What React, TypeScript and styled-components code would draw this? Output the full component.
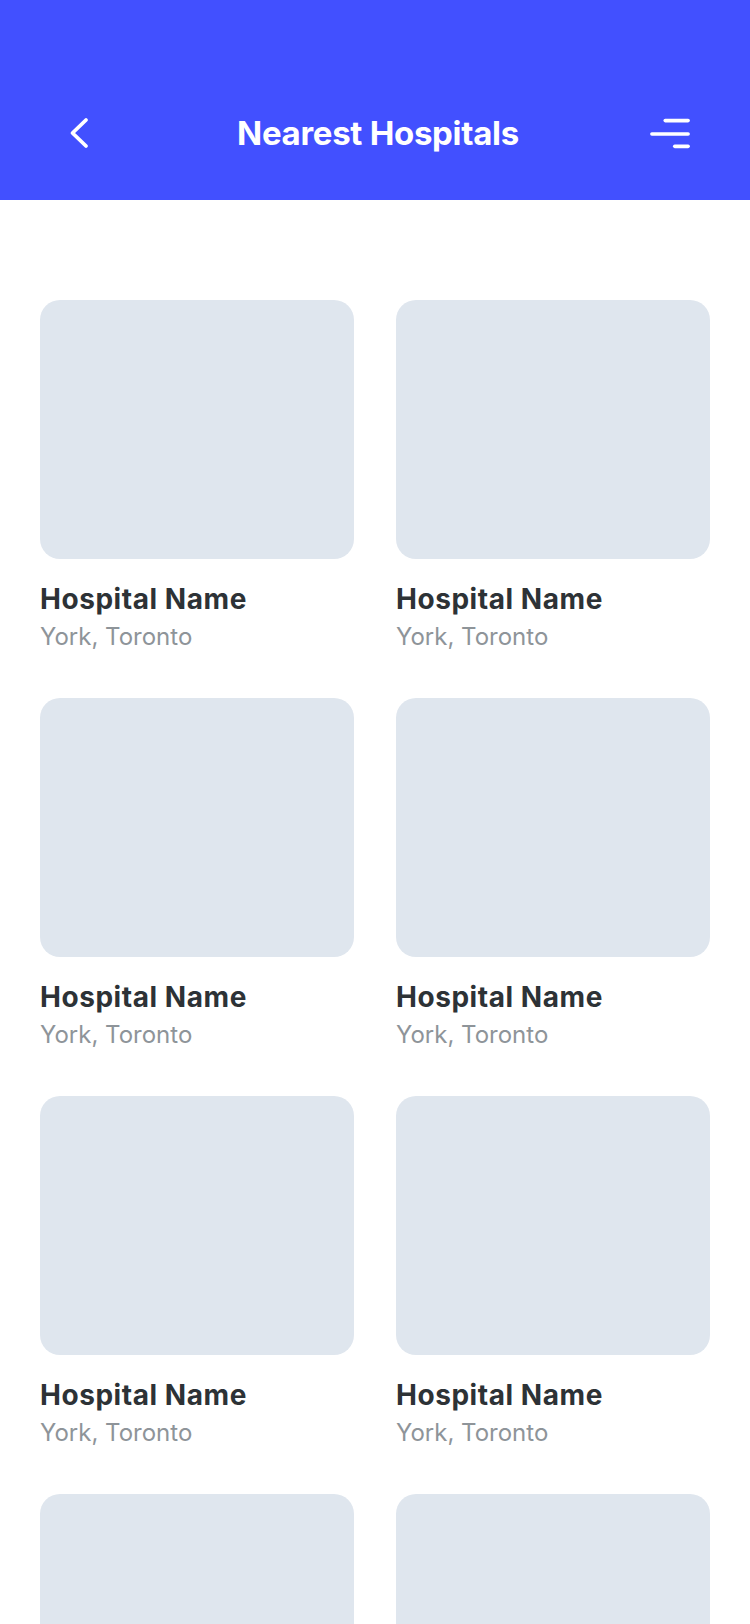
import React from "react";
import styled, { createGlobalStyle } from "styled-components";

const Global = createGlobalStyle`
  html, body { margin: 0; padding: 0; background: #ffffff; }
  body { font-family: Inter, "Open Sans", "Liberation Sans", sans-serif; -webkit-font-smoothing: antialiased; }
  * { box-sizing: border-box; }
`;

const Page = styled.div`
  width: 750px;
  height: 1624px;
  overflow: hidden;
  background: #ffffff;
`;

const Header = styled.header`
  height: 200px;
  background: #4250ff;
  display: flex;
  align-items: flex-start;
  padding: 113px 60px 0 66px;
`;

const NavRow = styled.div`
  flex: 1;
  height: 40px;
  display: grid;
  grid-template-columns: 40px 1fr 40px;
  align-items: center;
`;

const IconButton = styled.button<{ $end?: boolean }>`
  width: 40px;
  height: 40px;
  padding: 0;
  border: none;
  background: transparent;
  display: flex;
  align-items: center;
  justify-content: ${(p) => (p.$end ? "flex-end" : "flex-start")};
  color: #ffffff;
`;

const Title = styled.h1`
  margin: 0;
  text-align: center;
  color: #ffffff;
  font-size: 33px;
  font-weight: 700;
  letter-spacing: -0.3px;
  line-height: 40px;
`;

const Grid = styled.main`
  display: grid;
  grid-template-columns: 314px 314px;
  column-gap: 42px;
  row-gap: 46px;
  padding: 100px 40px 0 40px;
`;

const Card = styled.article`
  display: flex;
  flex-direction: column;
`;

const Thumb = styled.div`
  height: 259px;
  border-radius: 20px;
  background: #dfe6ee;
`;

const Name = styled.h2`
  margin: 23px 0 0;
  font-size: 28px;
  line-height: 34px;
  font-weight: 700;
  color: #2d3236;
  letter-spacing: 0.55px;
`;

const Location = styled.p`
  margin: 6px 0 0;
  font-size: 24px;
  line-height: 30px;
  font-weight: 400;
  color: #8e9499;
`;

const BackIcon = () => (
  <svg width="24" height="32" viewBox="0 0 24 32" fill="none">
    <path d="M20 3 L6.5 16 L20 29" stroke="#fff" strokeWidth="3.8" strokeLinecap="round" strokeLinejoin="round" />
  </svg>
);

const MenuIcon = () => (
  <svg width="42" height="32" viewBox="0 0 42 32" fill="none">
    <line x1="16" y1="3" x2="40" y2="3" stroke="#fff" strokeWidth="3.8" strokeLinecap="round" />
    <line x1="2" y1="17" x2="40" y2="17" stroke="#fff" strokeWidth="3.8" strokeLinecap="round" />
    <line x1="26" y1="30" x2="40" y2="30" stroke="#fff" strokeWidth="3.8" strokeLinecap="round" />
  </svg>
);

const hospitals = Array.from({ length: 8 }, (_, i) => ({
  id: i,
  name: "Hospital Name",
  location: "York, Toronto",
}));

export default function App() {
  return (
    <Page>
      <Global />
      <Header>
        <NavRow>
          <IconButton aria-label="Back">
            <BackIcon />
          </IconButton>
          <Title>Nearest Hospitals</Title>
          <IconButton $end aria-label="Menu">
            <MenuIcon />
          </IconButton>
        </NavRow>
      </Header>
      <Grid>
        {hospitals.map((h) => (
          <Card key={h.id}>
            <Thumb />
            <Name>{h.name}</Name>
            <Location>{h.location}</Location>
          </Card>
        ))}
      </Grid>
    </Page>
  );
}
